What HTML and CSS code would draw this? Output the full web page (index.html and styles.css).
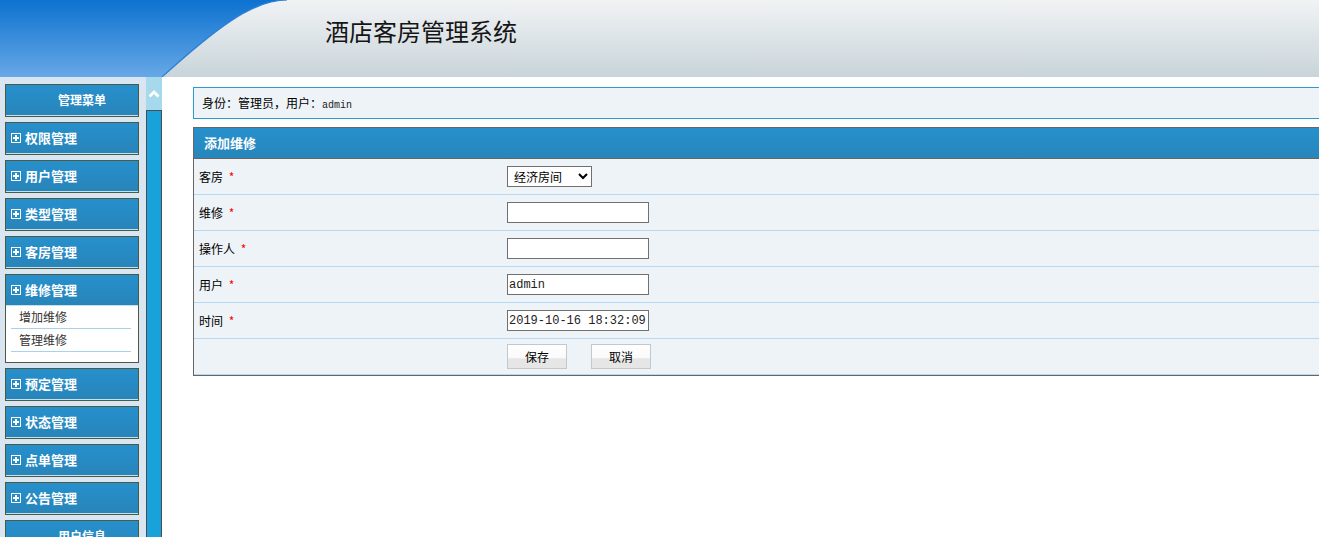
FILE: index.html
```html
<!DOCTYPE html>
<html lang="zh-CN">
<head>
    <meta charset="UTF-8">
    <meta name="viewport" content="width=device-width, initial-scale=1.0">
    <title>酒店客房管理系统</title>
    <link rel="stylesheet" href="styles.css">
</head>
<body>
    <div class="header">
        <svg class="header-art" width="300" height="77" viewBox="0 0 300 77">
            <defs>
                <linearGradient id="headBlue" x1="0" y1="0" x2="0" y2="1">
                    <stop offset="0" stop-color="#0d72d0"/>
                    <stop offset="1" stop-color="#67a8e6"/>
                </linearGradient>
            </defs>
            <path d="M0 0H287C252 0 214 30 162 77H0Z" fill="url(#headBlue)"/>
            <path d="M287 0C252 0 214 30 162 77" fill="none" stroke="#2a7fd6" stroke-width="1.2"/>
        </svg>
        <h1 class="title">酒店客房管理系统</h1>
    </div>

    <div class="layout">
        <div class="sidebar">
            <div class="menu-item menu-title">管理菜单</div>
            <div class="menu-item"><span class="plus"></span>权限管理</div>
            <div class="menu-item"><span class="plus"></span>用户管理</div>
            <div class="menu-item"><span class="plus"></span>类型管理</div>
            <div class="menu-item"><span class="plus"></span>客房管理</div>
            <div class="menu-group">
                <div class="menu-item"><span class="plus"></span>维修管理</div>
                <ul class="submenu">
                    <li>增加维修</li>
                    <li>管理维修</li>
                </ul>
            </div>
            <div class="menu-item"><span class="plus"></span>预定管理</div>
            <div class="menu-item"><span class="plus"></span>状态管理</div>
            <div class="menu-item"><span class="plus"></span>点单管理</div>
            <div class="menu-item"><span class="plus"></span>公告管理</div>
            <div class="menu-item menu-title">用户信息</div>
        </div>

        <div class="scroll">
            <div class="scroll-up">
                <svg width="12" height="9" viewBox="0 0 12 9">
                    <path d="M1.5 7.5L6 3L10.5 7.5" fill="none" stroke="#fff" stroke-width="2.8"/>
                </svg>
            </div>
            <div class="scroll-thumb"></div>
        </div>

        <div class="main">
            <div class="info">身份：管理员，用户：<span class="info-user">admin</span></div>

            <table class="form-table">
                <tr>
                    <th colspan="2">添加维修</th>
                </tr>
                <tr>
                    <td class="label">客房 <span class="req">*</span></td>
                    <td>
                        <select class="field-select">
                            <option>经济房间</option>
                            <option>标准房间</option>
                            <option>豪华房间</option>
                        </select>
                    </td>
                </tr>
                <tr>
                    <td class="label">维修 <span class="req">*</span></td>
                    <td><input class="field" type="text"></td>
                </tr>
                <tr>
                    <td class="label">操作人 <span class="req">*</span></td>
                    <td><input class="field" type="text"></td>
                </tr>
                <tr>
                    <td class="label">用户 <span class="req">*</span></td>
                    <td><input class="field" type="text" value="admin"></td>
                </tr>
                <tr>
                    <td class="label">时间 <span class="req">*</span></td>
                    <td><input class="field" type="text" value="2019-10-16 18:32:09"></td>
                </tr>
                <tr>
                    <td class="label"></td>
                    <td>
                        <button class="btn">保存</button><button class="btn">取消</button>
                    </td>
                </tr>
            </table>
        </div>
    </div>
</body>
</html>
```

FILE: styles.css
```css
body {
    margin: 0;
    height: 100vh;
    overflow: hidden;
    font-family: "Noto Sans CJK SC", "Liberation Sans", sans-serif;
    font-size: 12px;
    color: #000;
    background: #fff;
}

/* header */
.header {
    display: flex;
    align-items: flex-start;
    height: 77px;
    background: linear-gradient(#f1f3f4, #c8d4da);
}

.header-art {
    display: block;
    flex: none;
}

.title {
    margin: 19px 0 0 25px;
    font-size: 24px;
    line-height: 24px;
    font-weight: normal;
    color: #151515;
}

/* body layout */
.layout {
    display: flex;
    height: calc(100vh - 77px);
}

.sidebar {
    width: 134px;
    flex: none;
    padding: 7px 7px 0 5px;
    background-color: #dae5f2;
}

.menu-item {
    display: flex;
    align-items: center;
    gap: 4px;
    height: 33px;
    box-sizing: border-box;
    margin-bottom: 5px;
    padding: 0 0 3px 5px;
    border: 1px solid #4e5a3c;
    background: linear-gradient(#2690cd, #2884b8);
    box-shadow: inset 0 -1px 0 #c3e3f0;
    color: #fff;
    font-size: 13px;
    font-weight: bold;
    cursor: pointer;
}

.menu-title {
    justify-content: center;
    padding-left: 20px;
    font-size: 12px;
}

.plus {
    position: relative;
    width: 10px;
    height: 10px;
    margin-top: 2px;
    box-sizing: border-box;
    border: 1px solid #fff;
}

.plus::before,
.plus::after {
    content: "";
    position: absolute;
    background: #fff;
}

.plus::before {
    left: 1px;
    top: 3px;
    width: 6px;
    height: 2px;
}

.plus::after {
    left: 3px;
    top: 1px;
    width: 2px;
    height: 6px;
}

.menu-group {
    margin-bottom: 5px;
    border: 1px solid #4e5a3c;
    background: #fff;
}

.menu-group .menu-item {
    height: 31px;
    margin: 0;
    border: none;
}

.submenu {
    list-style: none;
    margin: 0;
    padding: 0 7px 10px 5px;
}

.submenu li {
    height: 22px;
    line-height: 22px;
    padding-left: 8px;
    border-bottom: 1px solid #a9d1ec;
    color: #333;
    cursor: pointer;
}

/* scroll strip */
.scroll {
    display: flex;
    flex-direction: column;
    width: 16px;
    flex: none;
}

.scroll-up {
    display: flex;
    align-items: center;
    justify-content: center;
    height: 33px;
    background-color: #a6d9eb;
}

.scroll-thumb {
    flex: 1;
    background-color: #19a2da;
    border: 1px solid #4d4d4d;
    border-bottom: none;
}

/* main */
.main {
    flex: 1;
    min-width: 0;
    overflow: hidden;
    padding: 10px 0 0 31px;
}

.info {
    width: 1252px;
    height: 32px;
    box-sizing: border-box;
    padding-left: 8px;
    line-height: 29px;
    border: 1px solid #2a9bd0;
    background-color: #eef3f7;
}

.info-user {
    font-family: "Liberation Mono", monospace;
    font-size: 10px;
    color: #222;
}

.form-table {
    width: 1252px;
    margin-top: 8px;
    border: 1px solid #666;
    border-spacing: 0;
    background-color: #eef3f7;
}

.form-table th {
    height: 30px;
    padding: 0 0 0 10px;
    text-align: left;
    color: #fff;
    font-size: 13px;
    font-weight: bold;
    line-height: 26px;
    background: linear-gradient(#2690cd, #2886ba);
    border-bottom: 1px solid #666;
}

.form-table td {
    height: 35px;
    padding: 0;
    border-bottom: 1px solid #b5d9f5;
    vertical-align: middle;
}

.form-table .label {
    width: 308px;
    padding-left: 5px;
    line-height: 32px;
}

.req {
    margin-left: 3px;
    color: #f00;
}

.field {
    display: block;
    width: 142px;
    height: 21px;
    box-sizing: border-box;
    margin: 0;
    padding: 0 1px;
    border: 1px solid #707070;
    font-family: "Liberation Mono", monospace;
    font-size: 12px;
    color: #222;
    background: #fff;
}

.field-select {
    display: block;
    width: 85px;
    height: 21px;
    margin: 0;
    padding: 0 0 0 2px;
    border: 1px solid #707070;
    border-radius: 0;
    font-family: "Noto Sans CJK SC", sans-serif;
    font-size: 12px;
    color: #000;
    background: #fff;
}

.btn {
    width: 60px;
    height: 25px;
    margin: 0 24px 0 0;
    padding: 0;
    border: 1px solid #c2c8cc;
    background: linear-gradient(#fff 0%, #fafafa 55%, #e6e6e6 60%, #e6e6e6 100%);
    font-family: "Noto Sans CJK SC", sans-serif;
    font-size: 12px;
    color: #000;
    cursor: pointer;
    vertical-align: middle;
}
```
